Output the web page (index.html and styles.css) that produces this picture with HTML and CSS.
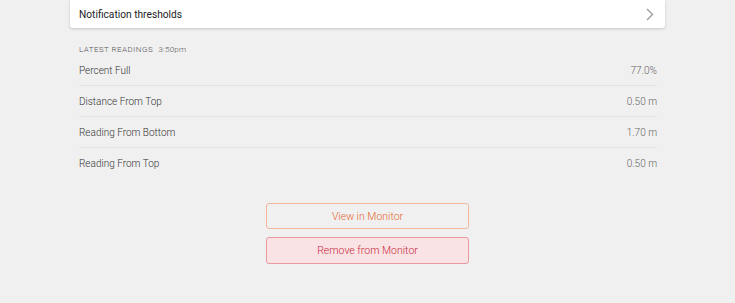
FILE: index.html
```html
<!DOCTYPE html>
<html lang="en">
<head>
  <meta charset="UTF-8">
  <meta name="viewport" content="width=device-width, initial-scale=1.0">
  <title>Monitor - Tank</title>
  <link rel="stylesheet" href="styles.css">
</head>
<body>
  <div class="page">
    <a class="card-link" href="#">
      <span>Notification thresholds</span>
      <svg class="chevron" width="8" height="13" viewBox="0 0 8 13">
        <path d="M1 1l5.5 5.5L1 12" fill="none" stroke="#9a9a9a" stroke-width="1.3"/>
      </svg>
    </a>

    <div class="readings">
      <div class="readings-title">LATEST READINGS <span class="time">3:50pm</span></div>
      <div class="row"><span>Percent Full</span><span class="value">77.0%</span></div>
      <div class="row"><span>Distance From Top</span><span class="value">0.50 m</span></div>
      <div class="row"><span>Reading From Bottom</span><span class="value">1.70 m</span></div>
      <div class="row"><span>Reading From Top</span><span class="value">0.50 m</span></div>
    </div>

    <div class="actions">
      <button class="btn btn-view">View in Monitor</button>
      <button class="btn btn-remove">Remove from Monitor</button>
    </div>
  </div>
</body>
</html>
```

FILE: styles.css
```css
body {
  margin: 0;
  background: #f0f0f0;
  font-family: Roboto, "Liberation Sans", sans-serif;
  color: #444;
}
.page {
  width: 595px;
  margin: 0 auto;
}
.card-link {
  display: flex;
  justify-content: space-between;
  align-items: center;
  height: 28px;
  padding: 0 11px 0 9px;
  background: #fff;
  border-radius: 0 0 3px 3px;
  box-shadow: 0 1px 3px rgba(0, 0, 0, 0.18);
  color: #222;
  font-size: 10.2px;
  text-decoration: none;
}
.readings {
  padding: 17px 8px 0 9px;
}
.readings-title {
  font-size: 8px;
  font-weight: 300;
  color: #555;
  letter-spacing: 0.45px;
  line-height: 10px;
}
.time {
  margin-left: 3px;
  letter-spacing: 0.2px;
}
.row {
  display: flex;
  justify-content: space-between;
  align-items: center;
  height: 30px;
  font-size: 10px;
  font-weight: 300;
  color: #333;
  border-bottom: 1px solid #e3e3e3;
}
.row:last-child {
  border-bottom: none;
}
.value {
  color: #666;
}
.actions {
  display: flex;
  flex-direction: column;
  align-items: center;
  gap: 8px;
  margin-top: 25px;
}
.btn {
  width: 203px;
  height: 27px;
  border-radius: 3px;
  font-family: inherit;
  font-size: 10.5px;
  font-weight: 300;
  cursor: pointer;
}
.btn-view {
  height: 26px;
  background: transparent;
  border: 1px solid #f2b79d;
  color: #e8672f;
}
.btn-remove {
  background: #fae3e5;
  border: 1px solid #e9999f;
  color: #c8283a;
}
```
